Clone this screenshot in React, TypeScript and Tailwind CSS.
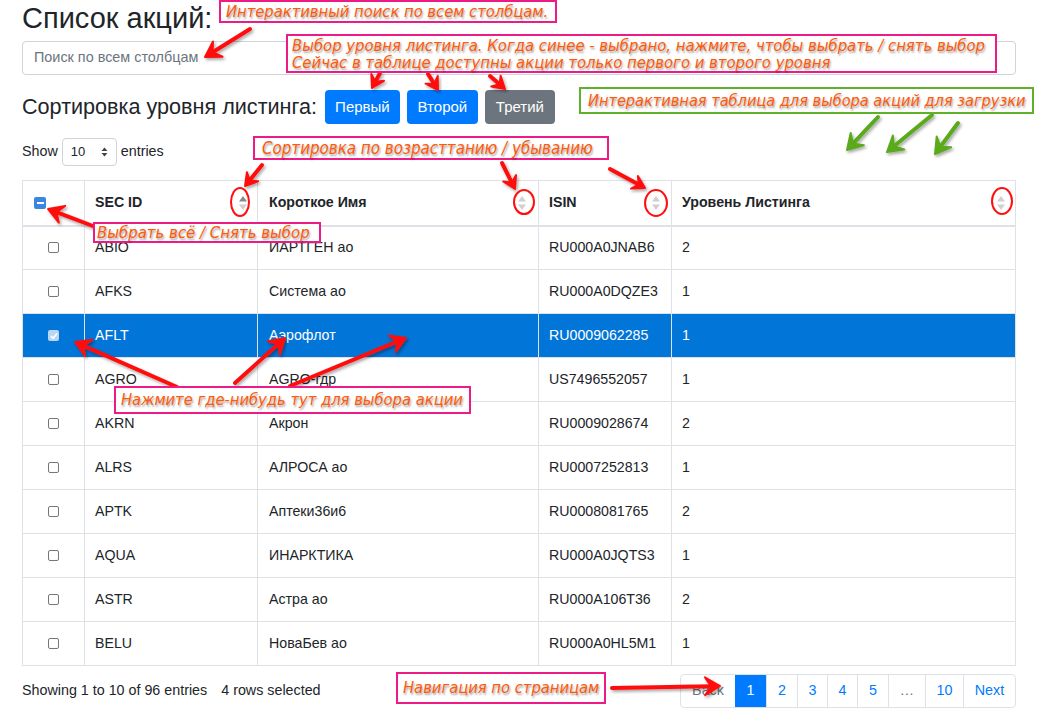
import React from 'react';

const rows = [
  ['ABIO', 'ИАРТГЕН ао', 'RU000A0JNAB6', '2'],
  ['AFKS', 'Система ао', 'RU000A0DQZE3', '1'],
  ['AFLT', 'Аэрофлот', 'RU0009062285', '1'],
  ['AGRO', 'AGRO-гдр', 'US7496552057', '1'],
  ['AKRN', 'Акрон', 'RU0009028674', '2'],
  ['ALRS', 'АЛРОСА ао', 'RU0007252813', '1'],
  ['APTK', 'Аптеки36и6', 'RU0008081765', '2'],
  ['AQUA', 'ИНАРКТИКА', 'RU000A0JQTS3', '1'],
  ['ASTR', 'Астра ао', 'RU000A106T36', '2'],
  ['BELU', 'НоваБев ао', 'RU000A0HL5M1', '1'],
];

function Arrow({ x1, y1, x2, y2, color = '#ff1010', w = 4, head = 15 }: { x1: number; y1: number; x2: number; y2: number; color?: string; w?: number; head?: number }) {
  const dx = x2 - x1;
  const dy = y2 - y1;
  const len = Math.hypot(dx, dy);
  const ux = dx / len;
  const uy = dy / len;
  const bx = x2 - ux * head;
  const by = y2 - uy * head;
  const nx = x2 - ux * head * 0.6;
  const ny = y2 - uy * head * 0.6;
  const px = -uy;
  const py = ux;
  const hw = head * 0.6;
  return (
    <g filter="url(#shadow)">
      <line x1={x1} y1={y1} x2={nx} y2={ny} stroke={color} strokeWidth={w} strokeLinecap="round" />
      <polygon
        points={`${x2},${y2} ${bx + px * hw},${by + py * hw} ${nx},${ny} ${bx - px * hw},${by - py * hw}`}
        fill={color}
        stroke={color}
        strokeWidth={2}
        strokeLinejoin="round"
      />
    </g>
  );
}

function SortIcon({ active }: { active?: boolean }) {
  return (
    <svg width="8" height="16" viewBox="0 0 8 16" className="shrink-0">
      <polygon points="4,1 8,6.5 0,6.5" fill={active ? '#8a8a8a' : '#d0d0d0'} />
      <polygon points="4,15 8,9.5 0,9.5" fill="#d0d0d0" />
    </svg>
  );
}

function Note({ className, children, green }: { className: string; children: React.ReactNode; green?: boolean }) {
  return (
    <div
      className={`absolute bg-white border-2 ${green ? 'border-[#5fb12c]' : 'border-[#ee1a86]'} text-[#ff5a0a] italic whitespace-nowrap [font-stretch:condensed] [text-shadow:1px_2px_2px_rgba(0,0,0,0.35)] ${className}`}
      style={{ fontFamily: '"DejaVu Sans Condensed", "DejaVu Sans", sans-serif' }}
    >
      {children}
    </div>
  );
}

export default function App() {
  return (
    <div className="relative w-[1041px] h-[718px] overflow-hidden bg-white text-[#212529]" style={{ fontFamily: '"Liberation Sans", Arial, sans-serif' }}>
      <div className="w-[994px] ml-[22px] flex flex-col">
        <h1 className="text-[29px] leading-[36px] font-normal">Список акций:</h1>
        <div className="mt-[5px] h-[34px] border border-[#ced4da] rounded-[4px] flex items-center px-[11px] text-[14.4px] text-[#6c757d]">
          Поиск по всем столбцам
        </div>

        <div className="mt-[15px] flex items-center gap-[7px]">
          <span className="text-[21.6px] mr-[1px]">Сортировка уровня листинга:</span>
          <button className="h-[34px] w-[75px] rounded-[4px] bg-[#007bff] text-white text-[15px]">Первый</button>
          <button className="h-[34px] w-[71px] rounded-[4px] bg-[#007bff] text-white text-[15px]">Второй</button>
          <button className="h-[34px] w-[70px] rounded-[4px] bg-[#6c757d] text-white text-[15px]">Третий</button>
        </div>

        <div className="mt-[14px] flex items-center gap-[4px] text-[14.3px]">
          <span>Show</span>
          <div className="w-[55px] h-[28px] border border-[#ced4da] rounded-[4px] flex items-center justify-between px-[8px] text-[13px]">
            <span>10</span>
            <svg width="7" height="10" viewBox="0 0 7 10">
              <polygon points="3.5,0.5 6.5,4 0.5,4" fill="#444" />
              <polygon points="3.5,9.5 6.5,6 0.5,6" fill="#444" />
            </svg>
          </div>
          <span>entries</span>
        </div>

        <table className="mt-[14px] w-[994px] table-fixed border-collapse border border-[#dee2e6] text-[14.2px]">
          <colgroup>
            <col className="w-[62px]" />
            <col className="w-[173px]" />
            <col className="w-[281px]" />
            <col className="w-[133px]" />
            <col />
          </colgroup>
          <thead>
            <tr className="h-[45px] border-b-2 border-[#dee2e6]">
              <th className="border border-[#dee2e6] pl-[11px] text-left">
                <span className="w-[12px] h-[12px] rounded-[2px] bg-[#3b86e0] flex items-center justify-center">
                  <span className="w-[7px] h-[2px] bg-white" />
                </span>
              </th>
              <th className="border border-[#dee2e6] px-[10px] text-left font-bold">
                <div className="flex items-center justify-between"><span>SEC ID</span><SortIcon active /></div>
              </th>
              <th className="border border-[#dee2e6] pl-[11px] pr-[12px] text-left font-bold">
                <div className="flex items-center justify-between"><span>Короткое Имя</span><SortIcon /></div>
              </th>
              <th className="border border-[#dee2e6] pl-[10px] pr-[11px] text-left font-bold">
                <div className="flex items-center justify-between"><span>ISIN</span><SortIcon /></div>
              </th>
              <th className="border border-[#dee2e6] pl-[10px] pr-[10px] text-left font-bold">
                <div className="flex items-center justify-between"><span>Уровень Листинга</span><SortIcon /></div>
              </th>
            </tr>
          </thead>
          <tbody>
            {rows.map((r, i) => {
              const sel = i === 2;
              return (
                <tr key={r[0]} className={`h-[44px] ${sel ? 'bg-[#0275d8] text-white' : ''}`}>
                  <td className="border border-[#dee2e6]">
                    <div className="flex justify-center">
                      {sel ? (
                        <span className="w-[11px] h-[11px] rounded-[2px] bg-[#b9d6f5] flex items-center justify-center">
                          <svg width="8" height="8" viewBox="0 0 8 8"><path d="M1 4.2 L3.2 6.3 L7 1.6" stroke="#fff" strokeWidth="1.6" fill="none" /></svg>
                        </span>
                      ) : (
                        <span className="w-[11px] h-[11px] rounded-[2px] border border-[#767676] bg-white" />
                      )}
                    </div>
                  </td>
                  <td className="border border-[#dee2e6] px-[10px]">{r[0]}</td>
                  <td className="border border-[#dee2e6] px-[11px]">{r[1]}</td>
                  <td className="border border-[#dee2e6] px-[10px]">{r[2]}</td>
                  <td className="border border-[#dee2e6] px-[10px]">{r[3]}</td>
                </tr>
              );
            })}
          </tbody>
        </table>

        <div className="mt-[8px] flex items-center justify-between text-[14.3px]">
          <div className="flex gap-[14px]">
            <span>Showing 1 to 10 of 96 entries</span>
            <span>4 rows selected</span>
          </div>
          <div className="flex h-[34px] border border-[#dee2e6] rounded-[4px] overflow-hidden text-[#007bff]">
            <span className="w-[54px] flex items-center justify-center text-[#6c757d]">Back</span>
            <span className="w-[31px] flex items-center justify-center bg-[#007bff] text-white">1</span>
            <span className="w-[31px] flex items-center justify-center border-l border-[#dee2e6]">2</span>
            <span className="w-[30px] flex items-center justify-center border-l border-[#dee2e6]">3</span>
            <span className="w-[30px] flex items-center justify-center border-l border-[#dee2e6]">4</span>
            <span className="w-[31px] flex items-center justify-center border-l border-[#dee2e6]">5</span>
            <span className="w-[37px] flex items-center justify-center border-l border-[#dee2e6] text-[#6c757d]">…</span>
            <span className="w-[38px] flex items-center justify-center border-l border-[#dee2e6]">10</span>
            <span className="w-[52px] flex items-center justify-center border-l border-[#dee2e6]">Next</span>
          </div>
        </div>
      </div>

      {/* annotation layer */}
      <div className="pointer-events-none absolute inset-0">
        <svg width="1041" height="718" className="absolute inset-0">
          <defs>
            <filter id="shadow" x="-30%" y="-30%" width="160%" height="160%">
              <feDropShadow dx="1.5" dy="2" stdDeviation="1.5" floodColor="#000" floodOpacity="0.35" />
            </filter>
          </defs>
          <Arrow x1={250} y1={29} x2={205} y2={57} />
          <Arrow x1={380} y1={73} x2={372} y2={88} head={12} />
          <Arrow x1={428} y1={74} x2={438} y2={90} head={12} />
          <Arrow x1={490} y1={76} x2={505} y2={89} head={12} />
          <Arrow x1={262} y1={165} x2={245} y2={186} head={12} />
          <Arrow x1={502} y1={163} x2={515} y2={189} head={12} />
          <Arrow x1={610} y1={169} x2={645} y2={188} head={12} />
          <Arrow x1={93} y1={226} x2={48} y2={209} />
          <Arrow x1={177} y1={387} x2={75} y2={342} />
          <Arrow x1={235} y1={383} x2={285} y2={338} />
          <Arrow x1={290} y1={386} x2={406} y2={338} />
          <Arrow x1={612} y1={688} x2={720} y2={686} />
          <Arrow x1={878} y1={117} x2={847} y2={150} color="#5aaa1e" />
          <Arrow x1={932} y1={115} x2={887} y2={152} color="#5aaa1e" />
          <Arrow x1={958} y1={123} x2={935} y2={154} color="#5aaa1e" />
          <ellipse cx={240} cy={202} rx={9} ry={14} fill="none" stroke="#ff1010" strokeWidth={2} />
          <ellipse cx={524} cy={202} rx={10} ry={12} fill="none" stroke="#ff1010" strokeWidth={2} />
          <ellipse cx={656} cy={203} rx={11} ry={13} fill="none" stroke="#ff1010" strokeWidth={2} />
          <ellipse cx={1002} cy={201} rx={10} ry={13} fill="none" stroke="#ff1010" strokeWidth={2} />
        </svg>

        <Note className="left-[219px] top-0 w-[338px] h-[23px] text-[16.4px] leading-[19px] pl-[5px]">Интерактивный поиск по всем столбцам.</Note>
        <Note className="left-[286px] top-[34px] w-[711px] h-[39px] text-[16.5px] leading-[17px] pl-[4px] pt-[1px]">
          <div>Выбор уровня листинга. Когда синее - выбрано, нажмите, чтобы выбрать / снять выбор</div>
          <div>Сейчас в таблице доступны акции только первого и второго уровня</div>
        </Note>
        <Note green className="left-[579px] top-[87px] w-[455px] h-[27px] text-[16.2px] leading-[23px] pl-[7px]">Интерактивная таблица для выбора акций для загрузки</Note>
        <Note className="left-[253px] top-[136px] w-[356px] h-[24px] text-[16.8px] leading-[20px] pl-[7px]">Сортировка по возрасттанию / убыванию</Note>
        <Note className="left-[93px] top-[222px] w-[228px] h-[21px] text-[16.6px] leading-[17px] pl-[2px]">Выбрать всё / Снять выбор</Note>
        <Note className="left-[114px] top-[386px] w-[357px] h-[28px] text-[16.4px] leading-[24px] pl-[5px]">Нажмите где-нибудь тут для выбора акции</Note>
        <Note className="left-[396px] top-[672px] w-[210px] h-[32px] text-[16.4px] leading-[28px] pl-[5px]">Навигация по страницам</Note>
      </div>
    </div>
  );
}
